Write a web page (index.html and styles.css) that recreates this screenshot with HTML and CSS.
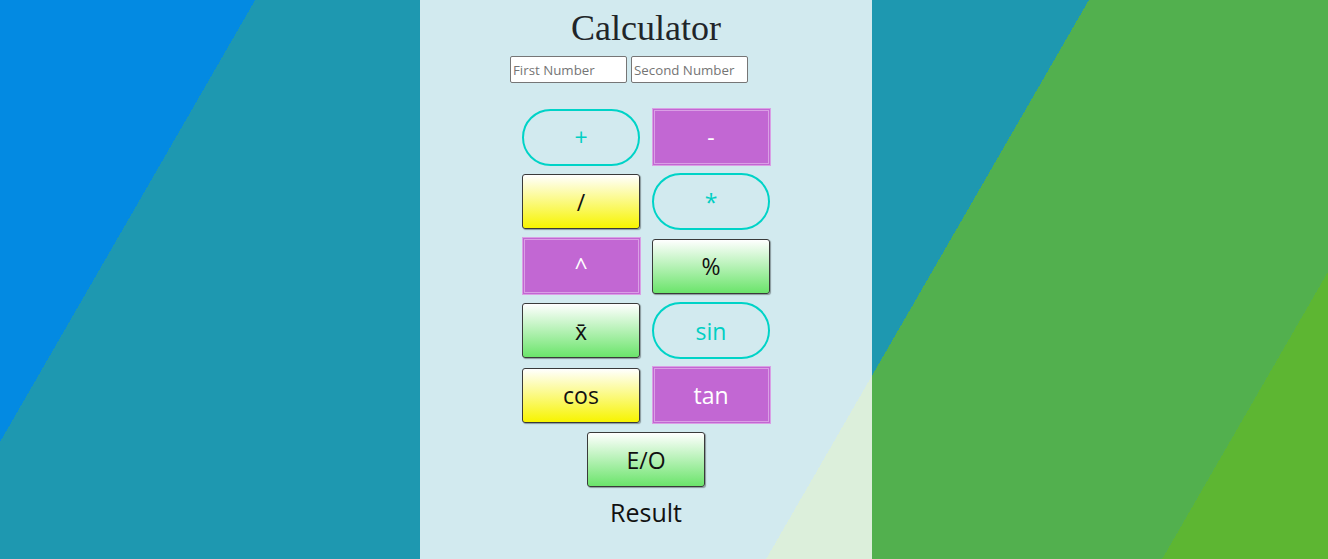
FILE: index.html
```html
<!DOCTYPE html>
<html lang="en">
<head>
<meta charset="utf-8">
<title>Calculator</title>
<link rel="stylesheet" href="styles.css">
</head>
<body>
<main class="panel">
  <h1 class="title">Calculator</h1>
  <div class="inputs">
    <input class="num" type="text" placeholder="First Number">
    <input class="num" type="text" placeholder="Second Number">
  </div>
  <div class="keys">
    <button class="key pill">+</button>
    <button class="key purple">-</button>
    <button class="key yellow">/</button>
    <button class="key pill">*</button>
    <button class="key purple">^</button>
    <button class="key green">%</button>
    <button class="key green">x&#772;</button>
    <button class="key pill">sin</button>
    <button class="key yellow">cos</button>
    <button class="key purple">tan</button>
    <button class="key green wide">E/O</button>
  </div>
  <p class="result">Result</p>
</main>
</body>
</html>
```

FILE: styles.css
```css
html, body {
  margin: 0;
  padding: 0;
}

body {
  height: 100vh;
  overflow: hidden;
  display: flex;
  font-family: "Open Sans", "Noto Sans", sans-serif;
  background:
    linear-gradient(120deg, transparent 1286px, #5db632 1286px),
    linear-gradient(120deg, transparent 943px, #52b04e 943px),
    linear-gradient(120deg, #038ae2 221px, #1e98b0 221px);
}

.panel {
  width: 452px;
  margin-left: 420px;
  padding-top: 8px;
  box-sizing: border-box;
  display: flex;
  flex-direction: column;
  align-items: center;
  background: rgba(255, 255, 255, 0.8);
}

.title {
  margin: 0;
  font-family: "Liberation Serif", "Times New Roman", serif;
  font-weight: normal;
  font-size: 36px;
  line-height: 40px;
  color: #212529;
}

.inputs {
  margin-top: 8px;
  display: flex;
  gap: 4px;
  padding-right: 34px;
}

.num {
  width: 117px;
  height: 27px;
  box-sizing: border-box;
  border: 1px solid #767676;
  border-radius: 2px;
  padding: 1px 2px;
  background: #fff;
  font-family: "Open Sans", "Noto Sans", sans-serif;
  font-size: 13.3px;
  color: #000;
}

.num::placeholder {
  color: #757575;
}

.keys {
  margin-top: 22px;
  display: grid;
  grid-template-columns: 118px 118px;
  column-gap: 12px;
  grid-auto-rows: 64.5px;
  align-items: center;
  justify-items: center;
}

.key {
  font-family: "Open Sans", "Noto Sans", sans-serif;
  font-size: 23px;
  padding: 0;
  box-sizing: border-box;
  width: 118px;
  height: 55px;
  cursor: pointer;
}

.pill {
  height: 57px;
  background: transparent;
  border: 2px solid #00d3c7;
  border-radius: 30px;
  color: #00cfc3;
}

.purple {
  width: 119px;
  height: 58px;
  background: #c267d3;
  border: 3px double #da9fe5;
  border-radius: 0;
  color: #fff;
}

.yellow {
  background: linear-gradient(#ffffff, #f7f400);
  border: 1px solid #3a3a3a;
  border-radius: 3px;
  box-shadow: 1px 1px 1px rgba(0, 0, 0, 0.35);
  color: #111;
}

.green {
  background: linear-gradient(#ffffff, #6be46b);
  border: 1px solid #3a3a3a;
  border-radius: 3px;
  box-shadow: 1px 1px 1px rgba(0, 0, 0, 0.35);
  color: #111;
}

.wide {
  grid-column: 1 / span 2;
}

.result {
  margin: 3px 0 0;
  font-size: 25px;
  line-height: 34px;
  color: #111;
}
```
